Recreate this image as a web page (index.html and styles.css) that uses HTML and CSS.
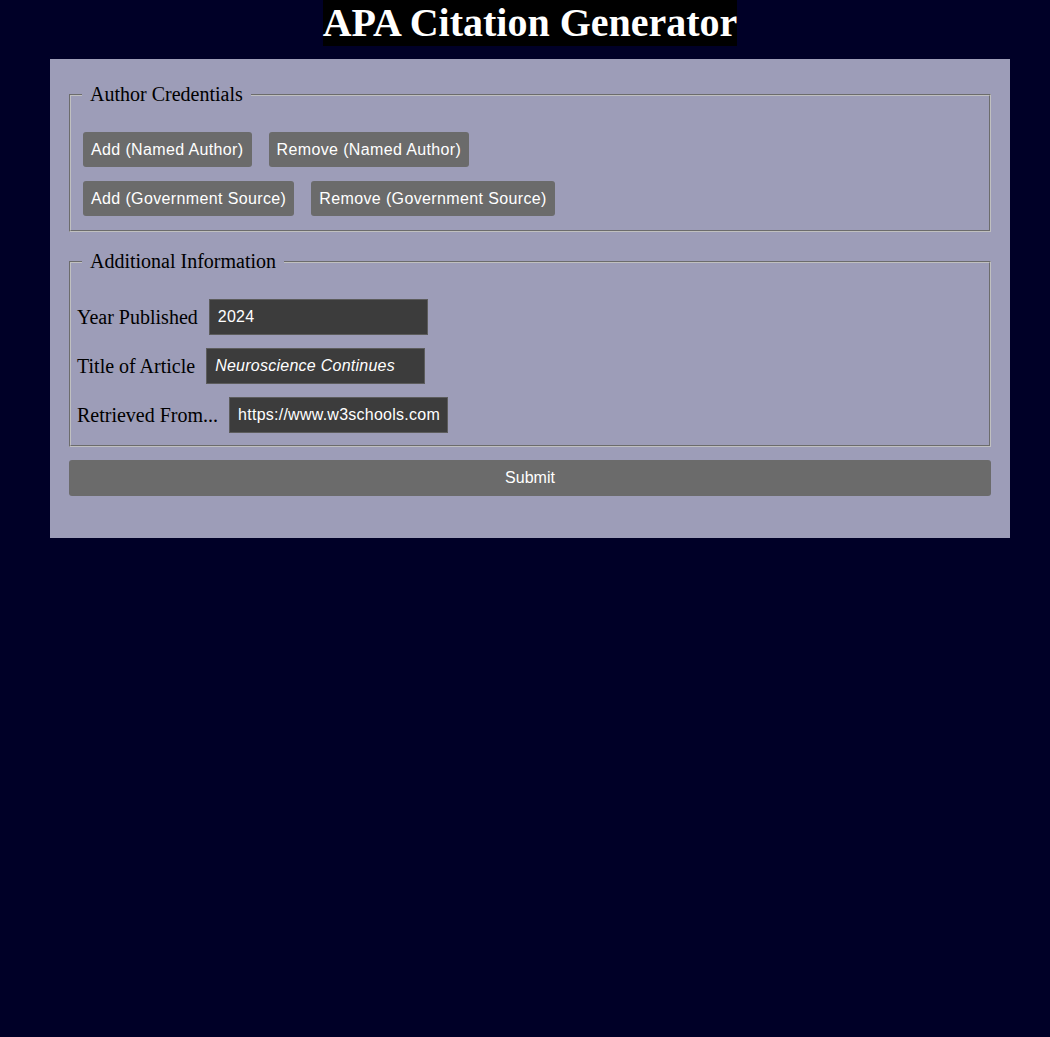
FILE: index.html
```html
<!DOCTYPE html>
<html lang="en">
<head>
<meta charset="utf-8">
<title>APA Citation Generator</title>
<link rel="stylesheet" href="styles.css">
</head>
<body>
<header class="title-wrap"><h1 class="title">APA Citation Generator</h1></header>
<form class="panel">
  <fieldset class="group group-authors">
    <legend class="group-legend">Author Credentials</legend>
    <div class="btn-rows">
      <div class="btn-row">
        <button type="button" class="btn">Add (Named Author)</button>
        <button type="button" class="btn">Remove (Named Author)</button>
      </div>
      <div class="btn-row">
        <button type="button" class="btn">Add (Government Source)</button>
        <button type="button" class="btn">Remove (Government Source)</button>
      </div>
    </div>
  </fieldset>
  <fieldset class="group group-info">
    <legend class="group-legend">Additional Information</legend>
    <div class="field-rows">
      <div class="field-row">
        <label class="field-label" for="year">Year Published</label>
        <input class="field-input" id="year" type="text" value="2024">
      </div>
      <div class="field-row">
        <label class="field-label" for="title">Title of Article</label>
        <input class="field-input italic" id="title" type="text" value="Neuroscience Continues">
      </div>
      <div class="field-row">
        <label class="field-label" for="url">Retrieved From...</label>
        <input class="field-input" id="url" type="text" value="https://www.w3schools.com">
      </div>
    </div>
  </fieldset>
  <button type="button" class="submit">Submit</button>
</form>
</body>
</html>
```
FILE: styles.css
```css
html, body {
  background: #000027;
}
body {
  margin: 0 0 0 10px;
  font-family: "Liberation Serif", "Times New Roman", serif;
}
.title-wrap {
  text-align: center;
}
.title {
  display: inline-block;
  margin: 0;
  font-size: 40px;
  line-height: 46px;
  font-weight: bold;
  color: #ffffff;
  background: #000000;
}
.panel {
  box-sizing: border-box;
  width: 960px;
  margin: 13px auto 0;
  padding: 24px 17px 42px;
  background: #9d9db8;
}
.group {
  margin: 0 2px;
  border: 2px groove rgb(192, 192, 192);
  min-width: 0;
}
.group-authors {
  padding: 26px 12px 14px;
}
.group-info {
  margin-top: 18px;
  padding: 26px 6px 12px;
}
.group-legend {
  font-size: 20px;
  line-height: 23px;
  color: #000;
  padding: 0 8px;
}
.group-authors .group-legend {
  margin-left: -1px;
}
.group-info .group-legend {
  margin-left: 5px;
}
.btn-rows {
  display: flex;
  flex-direction: column;
  gap: 14px;
}
.btn-row {
  display: flex;
  gap: 17px;
}
.btn {
  font-family: "Liberation Sans", Arial, sans-serif;
  font-size: 16px;
  letter-spacing: 0.37px;
  line-height: 19px;
  padding: 8px;
  border: 0;
  border-radius: 3px;
  background: #6b6b6b;
  color: #ffffff;
}
.field-rows {
  display: flex;
  flex-direction: column;
  gap: 13px;
}
.field-row {
  display: flex;
  align-items: center;
  gap: 11px;
}
.field-label {
  font-size: 20px;
  color: #000;
}
.field-input {
  box-sizing: border-box;
  width: 219px;
  height: 36px;
  padding: 8px 2px 8px 8px;
  border: 1px solid #5c5c5c;
  background: #3c3c3c;
  color: #ffffff;
  font-family: "Liberation Sans", Arial, sans-serif;
  font-size: 16px;
  letter-spacing: 0.25px;
  outline: none;
}
.italic {
  font-style: italic;
}
.submit {
  display: block;
  box-sizing: border-box;
  width: calc(100% - 4px);
  margin: 13px 2px 0;
  height: 36px;
  padding: 0;
  border: 0;
  border-radius: 3px;
  background: #6b6b6b;
  color: #ffffff;
  font-family: "Liberation Sans", Arial, sans-serif;
  font-size: 16px;
}
```
